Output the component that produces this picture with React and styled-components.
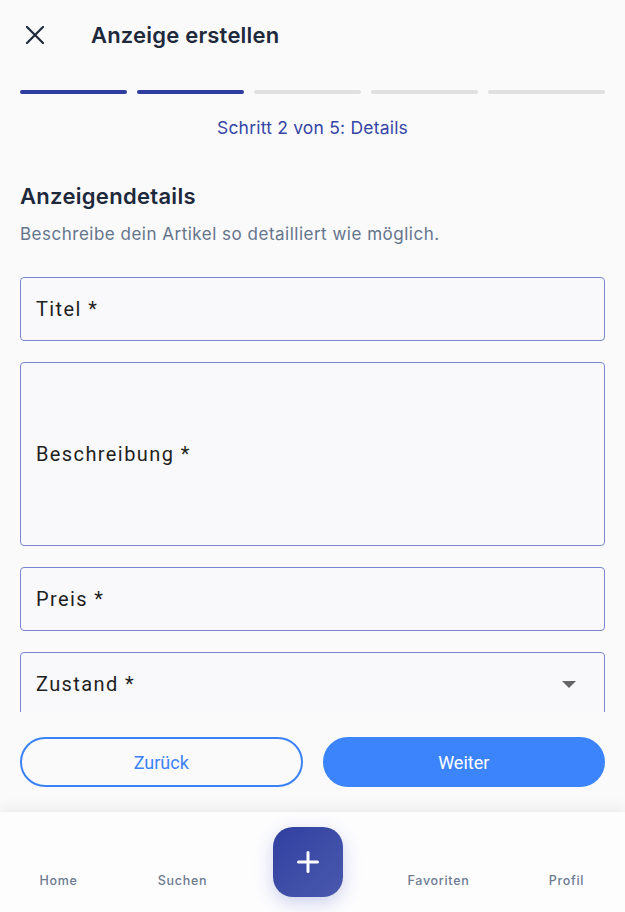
import React from "react";
import styled, { createGlobalStyle } from "styled-components";

const Global = createGlobalStyle`
  html, body { margin: 0; padding: 0; background: #fafafb; }
  * { box-sizing: border-box; }
  #root { height: 912px; }
`;

const Screen = styled.div`
  width: 625px;
  height: 912px;
  display: flex;
  flex-direction: column;
  background: #fafafb;
  font-family: Inter, "Liberation Sans", sans-serif;
  overflow: hidden;
`;

const Header = styled.header`
  height: 72px;
  flex: none;
  display: flex;
  align-items: center;
  padding-left: 26px;
  padding-bottom: 2px;
  gap: 47px;
`;

const CloseButton = styled.button`
  border: 0;
  background: none;
  padding: 0;
  width: 18px;
  height: 18px;
  display: flex;
  cursor: pointer;
`;

const Title = styled.h1`
  margin: 0;
  font-size: 22px;
  font-weight: 600;
  color: #1e293b;
  letter-spacing: 0.2px;
`;

const Content = styled.main`
  flex: 1;
  min-height: 0;
  overflow: hidden;
  padding: 18px 20px 0;
  display: flex;
  flex-direction: column;
`;

const Progress = styled.div`
  display: grid;
  grid-template-columns: repeat(4, 107px) 1fr;
  gap: 10px;
`;

const Segment = styled.div`
  height: 4px;
  border-radius: 2px;
  background: ${(p) => (p.$active ? "#2f3e9e" : "#e0e0e0")};
`;

const StepText = styled.p`
  margin: 24px 0 0;
  text-align: center;
  font-size: 17.5px;
  line-height: 20px;
  letter-spacing: 0.2px;
  color: #3545a6;
`;

const SectionTitle = styled.h2`
  margin: 44px 0 0;
  font-size: 22px;
  line-height: 28px;
  font-weight: 600;
  letter-spacing: 0.3px;
  color: #1e293b;
`;

const SectionSub = styled.p`
  margin: 13px 0 0;
  font-size: 17px;
  line-height: 22px;
  letter-spacing: 0.5px;
  color: #64748b;
`;

const Form = styled.div`
  margin-top: 32px;
  display: flex;
  flex-direction: column;
  gap: 21px;
`;

const Field = styled.div`
  flex: none;
  height: ${(p) => p.$h}px;
  border: 1px solid #7c86d0;
  border-radius: 4px;
  background: #f9f9fb;
  display: flex;
  align-items: center;
  padding: 0 15px;
  justify-content: space-between;
`;

const FieldLabel = styled.span`
  font-family: Roboto, "Liberation Sans", sans-serif;
  font-size: 20px;
  letter-spacing: 1.4px;
  color: #1f1f1f;
`;

const Arrow = styled.span`
  width: 0;
  height: 0;
  margin-right: 13px;
  border-left: 7px solid transparent;
  border-right: 7px solid transparent;
  border-top: 7px solid #666;
`;

const ActionBar = styled.div`
  flex: none;
  height: 100px;
  padding: 25px 20px 0;
  display: grid;
  grid-template-columns: 1fr 1fr;
  gap: 20px;
  position: relative;
  z-index: 0;
`;

const ActionButton = styled.button`
  height: 50px;
  border-radius: 25px;
  font-family: Roboto, "Liberation Sans", sans-serif;
  font-size: 18px;
  cursor: pointer;
  border: 2px solid #3b82f6;
  background: ${(p) => (p.$primary ? "#3b84fc" : "transparent")};
  border-color: ${(p) => (p.$primary ? "#3b84fc" : "#3b82f6")};
  color: ${(p) => (p.$primary ? "#ffffff" : "#3b82f6")};
`;

const NavBar = styled.nav`
  flex: none;
  height: 100px;
  background: #fdfdfe;
  box-shadow: 0 -3px 14px rgba(0, 0, 0, 0.07);
  display: grid;
  grid-template-columns: repeat(5, 1fr);
  align-items: center;
  position: relative;
  z-index: 1;
`;

const NavItem = styled.div`
  text-align: center;
  font-size: 12.5px;
  font-weight: 500;
  letter-spacing: 0.7px;
  color: #6b7a90;
  padding-top: 36px;
  margin-left: ${(p) => p.$shift || 0}px;
`;

const Fab = styled.button`
  justify-self: center;
  margin-right: 9px;
  width: 70px;
  height: 70px;
  border: 0;
  border-radius: 20px;
  background: linear-gradient(135deg, #3140a0 0%, #4a59ad 100%);
  box-shadow: 0 6px 18px rgba(63, 81, 181, 0.25);
  display: flex;
  align-items: center;
  justify-content: center;
  cursor: pointer;
`;

export default function App() {
  return (
    <>
      <Global />
      <Screen>
        <Header>
          <CloseButton aria-label="Schließen">
            <svg width="18" height="18" viewBox="0 0 18 18">
              <path d="M1 1L17 17M17 1L1 17" stroke="#1e293b" strokeWidth="2.2" strokeLinecap="round" />
            </svg>
          </CloseButton>
          <Title>Anzeige erstellen</Title>
        </Header>
        <Content>
          <Progress>
            {[1, 2, 3, 4, 5].map((i) => (
              <Segment key={i} $active={i <= 2} />
            ))}
          </Progress>
          <StepText>Schritt 2 von 5: Details</StepText>
          <SectionTitle>Anzeigendetails</SectionTitle>
          <SectionSub>Beschreibe dein Artikel so detailliert wie möglich.</SectionSub>
          <Form>
            <Field $h={64}>
              <FieldLabel>Titel *</FieldLabel>
            </Field>
            <Field $h={184}>
              <FieldLabel>Beschreibung *</FieldLabel>
            </Field>
            <Field $h={64}>
              <FieldLabel>Preis *</FieldLabel>
            </Field>
            <Field $h={64}>
              <FieldLabel>Zustand *</FieldLabel>
              <Arrow />
            </Field>
          </Form>
        </Content>
        <ActionBar>
          <ActionButton>Zurück</ActionButton>
          <ActionButton $primary>Weiter</ActionButton>
        </ActionBar>
        <NavBar>
          <NavItem $shift={-8}>Home</NavItem>
          <NavItem $shift={-10}>Suchen</NavItem>
          <Fab aria-label="Anzeige erstellen">
            <svg width="22" height="22" viewBox="0 0 22 22">
              <path d="M11 1.5V20.5M1.5 11H20.5" stroke="#fff" strokeWidth="3" strokeLinecap="round" />
            </svg>
          </Fab>
          <NavItem $shift={2}>Favoriten</NavItem>
          <NavItem $shift={8}>Profil</NavItem>
        </NavBar>
      </Screen>
    </>
  );
}
